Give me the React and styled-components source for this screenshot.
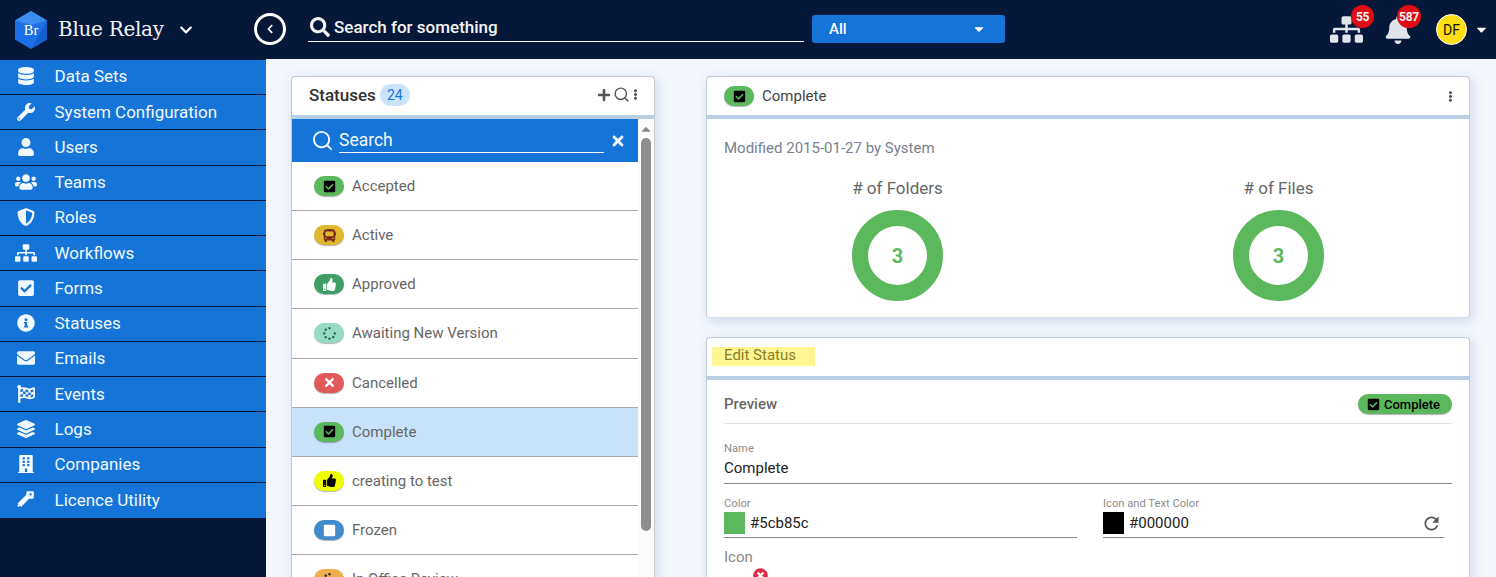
import React from "react";
import styled, { createGlobalStyle } from "styled-components";
import {
  FaDatabase, FaWrench, FaUser, FaUsers, FaShieldAlt, FaSitemap, FaCheckSquare, FaInfoCircle,
  FaEnvelope, FaFlagCheckered, FaLayerGroup, FaBuilding, FaBus, FaThumbsUp, FaSpinner,
  FaTimes, FaBell, FaPlus, FaSearch, FaEllipsisV, FaStop, FaChevronDown, FaChevronLeft, FaCaretDown, FaCaretUp, FaTimesCircle,
} from "react-icons/fa";
import { FiSearch } from "react-icons/fi";
import { MdRefresh } from "react-icons/md";

const Global = createGlobalStyle`
  html, body { margin: 0; padding: 0; height: 100%; overflow: hidden; background: #f4f8fd; }
  body { font-family: Roboto, "Liberation Sans", sans-serif; }
  * { box-sizing: border-box; }
`;

const Page = styled.div`
  width: 1496px; height: 577px; overflow: hidden; display: flex; flex-direction: column;
`;
const Header = styled.header`
  height: 59px; flex: none; background: #06183a; display: flex; align-items: center; color: #fff;
`;
const Brand = styled.div`
  width: 254px; flex: none; display: flex; align-items: center; padding-left: 14px; height: 100%;
`;
const BrandName = styled.span`
  font-family: "DejaVu Serif", "Liberation Serif", serif; font-size: 20px; color: #f0f2f5; margin: -2px 0 0 10px; letter-spacing: -0.3px;
`;
const BrandCaret = styled.span`
  display: flex; margin-left: 15px; font-size: 14px; color: #fff;
`;
const BackButton = styled.button`
  width: 32px; height: 32px; margin-top: -1px; border-radius: 50%; border: 3px solid #fff; background: transparent; color: #fff;
  display: flex; align-items: center; justify-content: center; padding: 0; font-size: 10px; flex: none;
`;
const SearchBox = styled.div`
  width: 496px; height: 28px; margin: -3px 0 0 22px; display: flex; align-items: center; gap: 4px; border-bottom: 1px solid #fff;
  padding: 0 0 1px 2px; font-size: 17px; font-weight: 500; color: #f4f4f4; flex: none;
`;
const Select = styled.div`
  width: 193px; height: 28px; margin: -1px 0 0 8px; background: #1474d8; border-radius: 3px; display: flex; align-items: center;
  justify-content: space-between; padding: 0 19px 0 17px; font-size: 15px; font-weight: 500; flex: none;
`;
const HeaderRight = styled.div`
  margin-left: auto; display: flex; align-items: center; height: 100%; padding-right: 7px;
`;
const Alert = styled.div`
  position: relative; display: flex; color: #e1e4ea; margin-right: ${p => p.$gap}px;
`;
const Badge = styled.span`
  position: absolute; top: ${p => p.$top}px; left: ${p => p.$left}px; min-width: ${p => p.$w}px; height: 23px; border-radius: 12px; background: #e00b15; color: #f4f4f4;
  font-size: 12px; font-weight: 700; display: flex; align-items: center; justify-content: center; letter-spacing: -0.3px;
`;
const Avatar = styled.div`
  width: 31px; height: 31px; border-radius: 50%; background: #ffdf14; border: 1px solid #fff; color: #111; font-size: 14px;
  display: flex; align-items: center; justify-content: center; flex: none;
`;
const AvatarCaret = styled.span`
  display: flex; font-size: 15px; margin-left: 7px;
`;
const Body = styled.div`
  flex: 1; min-height: 0; display: flex;
`;
const Sidebar = styled.nav`
  width: 266px; flex: none; background: #06183a; padding-top: 0.75px;
`;
const NavItem = styled.div`
  height: 35.25px; padding-bottom: 1px; background: #1474d8; border-bottom: 1px solid #06183a; display: flex; align-items: center; color: #f2f8ff;
  font-size: 17px; &:last-child { border-bottom: 0; }
`;
const NavIcon = styled.span`
  width: 54.5px; flex: none; display: flex; justify-content: center; padding-right: 3px;
`;
const Main = styled.main`
  flex: 1; min-width: 0; display: grid; grid-template-columns: 364px 1fr; column-gap: 51px; padding: 17px 26px 0 25px; align-items: start;
`;
const Card = styled.section`
  background: #fff; border-radius: 4px; border: 1px solid #c3c9d3; border-bottom-color: #d8dde6; box-shadow: 2px 3px 12px rgba(90, 125, 180, .25);
`;
const ListCard = styled(Card)`
  height: 560px; overflow: hidden;
`;
const RightColumn = styled.div`
  display: flex; flex-direction: column; gap: 19px;
`;
const CardHead = styled.div`
  height: 38px; border-bottom: 4px solid #b8cfe6; box-sizing: content-box; display: flex; align-items: center;
  padding: 0 ${p => p.$pr || 17}px ${p => p.$pb || 0}px 17px; color: #444;
`;
const ListHead = styled(CardHead)`
  height: 35px;
`;
const CardTitle = styled.h2`
  margin: 0; font-size: 17px; font-weight: 500; color: #333;
`;
const Count = styled.span`
  height: 22px; width: 30px; margin-left: 4px; border-radius: 11px; background: #cbe4fb; color: #1474d8; font-size: 14px; display: flex; align-items: center; justify-content: center;
`;
const Tools = styled.div`
  margin-left: auto; display: flex; align-items: center; color: #555;
`;
const ListBody = styled.div`
  display: flex; height: 520px;
`;
const ListCol = styled.div`
  flex: 1; min-width: 0;
`;
const ListSearch = styled.div`
  height: 43px; background: #1474d8; color: #f2f8ff; display: flex; align-items: center; padding: 0 12px 0 18.5px; font-size: 17.5px;
`;
const ListSearchField = styled.div`
  flex: 1; height: 25px; margin: 0 6px 0 5.5px; border-bottom: 1px solid #fff; line-height: 24px;
`;
const Row = styled.div`
  height: 49.15px; display: flex; align-items: center; padding-left: 22px; border-bottom: 1px solid #aaa; background: ${p => p.$active ? "#c8e2fb" : "#fff"};
  color: #666; font-size: 15px; gap: 8px;
`;
const Pill = styled.span`
  width: 30px; height: 20px; flex: none; border-radius: 10px; background: ${p => p.$bg}; color: ${p => p.$fg}; display: flex; align-items: center; justify-content: center;
  font-size: ${p => p.$size || 13}px; box-shadow: 0 1px 1px rgba(0,0,0,.3);
`;
const Track = styled.div`
  width: 16px; flex: none; background: #fbfbfb; display: flex; flex-direction: column; align-items: center; color: #888; padding-top: 3px;
`;
const Arrow = styled.span`
  display: flex; height: 13px; align-items: center; font-size: 14px; margin-bottom: 3px;
`;
const Thumb = styled.div`
  width: 10px; height: 393px; background: #8e8e8e; border-radius: 5px; flex: none;
`;
const HeadLabel = styled.span`
  font-size: 15px; color: #444; margin-left: 8px;
`;
const Modified = styled.div`
  padding: 19.5px 17px 0; font-size: 15px; color: #788290; height: 53px;
`;
const Stats = styled.div`
  display: grid; grid-template-columns: 1fr 1fr; height: 145px;
`;
const Stat = styled.div`
  display: flex; flex-direction: column; align-items: center;
`;
const StatTitle = styled.div`
  font-size: 17px; color: #666; line-height: 20px; margin-bottom: 12px; padding-top: 6px;
`;
const Donut = styled.div`
  width: 91px; height: 91px; border-radius: 50%; border: 16px solid #5cb85c; color: #5cb85c; font-size: 20px; font-weight: 700; display: flex; align-items: center; justify-content: center;
`;
const EditTitle = styled.span`
  margin: -2px 0 0 -12px; padding: 0 19px 0 12px; height: 19px; line-height: 17px; background: #fff691; color: #86802a; font-size: 15px;
`;
const Form = styled.div`
  padding: 13px 17px 0;
`;
const PreviewRow = styled.div`
  display: flex; align-items: center; justify-content: space-between; border-bottom: 1px solid #e2e2e2; padding-bottom: 8px; box-sizing: content-box; height: 22px;
  font-size: 15px; font-weight: 500; color: #666;
`;
const WidePill = styled.span`
  height: 20px; width: 94px; padding-right: 3px; border-radius: 10px; background: #5cb85c; color: #000; font-size: 13px; font-weight: 500; display: flex; align-items: center; justify-content: center; gap: 4px;
  box-shadow: 0 1px 1px rgba(0,0,0,.3);
`;
const Field = styled.div`
  margin-top: ${p => p.$top || 0}px; color: #222;
`;
const FieldLabel = styled.div`
  font-size: 11.2px; line-height: 13px; color: #8c8c8c;
`;
const NameValue = styled.div`
  font-size: 15px; height: 28px; line-height: 24px; border-bottom: 1px solid #888; margin-top: 1px;
`;
const ColorGrid = styled.div`
  display: grid; grid-template-columns: 353px 341px; column-gap: 26px; margin-top: 13px;
`;
const ColorValue = styled.div`
  height: 28px; border-bottom: 1px solid #888; display: flex; align-items: flex-start; gap: 5px; font-size: 15px; line-height: 27px;
`;
const Swatch = styled.span`
  width: 21px; height: 22px; flex: none; margin-top: 2px; background: ${p => p.$c};
`;
const Reload = styled.span`
  margin: 0 2px 0 auto; display: flex; font-size: 21px; color: #555; padding-top: 3px;
`;
const IconLabel = styled.div`
  font-size: 15px; color: #888; margin-top: 11px; line-height: 17px;
`;
const RemoveIcon = styled.div`
  padding-left: 29px; color: #dc2b47; font-size: 15px; display: flex; margin-top: 2px; height: 15px;
`;

function KeyIcon({ size }) {
  return (
    <svg width={size} height={size} viewBox="0 0 24 24" fill="currentColor">
      <path
        fillRule="evenodd"
        d="M13 3Q13 1.5 14.5 1.5H21Q22.5 1.5 22.5 3V9.5Q22.5 11 21 11H16.5L6.5 21.5L4.8 19.8L3.2 21.4L1.6 19.8L3.2 18.2L2 17L13 6ZM18.5 4A1.5 1.5 0 1 0 18.5 7A1.5 1.5 0 1 0 18.5 4Z"
      />
    </svg>
  );
}

const nav = [
  [FaDatabase, "Data Sets", 18], [FaWrench, "System Configuration", 18], [FaUser, "Users", 18], [FaUsers, "Teams", 22],
  [FaShieldAlt, "Roles", 18], [FaSitemap, "Workflows", 22], [FaCheckSquare, "Forms", 18], [FaInfoCircle, "Statuses", 18],
  [FaEnvelope, "Emails", 18], [FaFlagCheckered, "Events", 18], [FaLayerGroup, "Logs", 18], [FaBuilding, "Companies", 18], [KeyIcon, "Licence Utility", 19],
];
const rows = [
  ["Accepted", FaCheckSquare, "#5cb85c", "#000"],
  ["Active", FaBus, "#dfb82f", "#7b2a18"],
  ["Approved", FaThumbsUp, "#3d9f63", "#fff"],
  ["Awaiting New Version", FaSpinner, "#97dcc2", "#1e6b5a"],
  ["Cancelled", FaTimes, "#e05a5a", "#fff"],
  ["Complete", FaCheckSquare, "#5cb85c", "#000", true],
  ["creating to test", FaThumbsUp, "#eeff00", "#000"],
  ["Frozen", FaStop, "#428bca", "#fff"],
  ["In Office Review", FaSpinner, "#f0ad4e", "#222"],
];

function Logo() {
  return (
    <svg width="34" height="38" viewBox="0 0 34 38">
      <polygon points="17,0 33,9.5 33,28.5 17,38 1,28.5 1,9.5" fill="#1b70e6" />
      <polygon points="17,0 33,9.5 17,14 1,9.5" fill="#3d8cf0" />
      <polygon points="33,9.5 33,28.5 17,38 24,26" fill="#1460cc" />
      <text x="17" y="24" textAnchor="middle" fontFamily="Liberation Serif, serif" fontSize="14.5" fill="#fff">Br</text>
    </svg>
  );
}

export default function App() {
  return (
    <Page>
      <Global />
      <Header>
        <Brand>
          <Logo />
          <BrandName>Blue Relay</BrandName>
          <BrandCaret><FaChevronDown /></BrandCaret>
        </Brand>
        <BackButton><FaChevronLeft /></BackButton>
        <SearchBox><FaSearch size={20} />Search for something</SearchBox>
        <Select>All<FaCaretDown size={14} /></Select>
        <HeaderRight>
          <Alert $gap={21}>
            <FaSitemap size={33} />
            <Badge $top={-8} $left={21} $w={23}>55</Badge>
          </Alert>
          <Alert $gap={24}>
            <FaBell size={28} />
            <Badge $top={-10.5} $left={13} $w={24}>587</Badge>
          </Alert>
          <Avatar>DF</Avatar>
          <AvatarCaret><FaCaretDown /></AvatarCaret>
        </HeaderRight>
      </Header>
      <Body>
        <Sidebar>
          {nav.map(([Icon, label, size]) => (
            <NavItem key={label}><NavIcon><Icon size={size} /></NavIcon>{label}</NavItem>
          ))}
        </Sidebar>
        <Main>
          <ListCard>
            <ListHead $pr={13} $pb={3}>
              <CardTitle>Statuses</CardTitle>
              <Count>24</Count>
              <Tools>
                <FaPlus size={14} />
                <FiSearch size={17} style={{ marginLeft: 2.5 }} />
                <FaEllipsisV size={11} />
              </Tools>
            </ListHead>
            <ListBody>
              <ListCol>
                <ListSearch>
                  <FiSearch size={23} />
                  <ListSearchField>Search</ListSearchField>
                  <FaTimes size={16} />
                </ListSearch>
                {rows.map(([label, Icon, bg, fg, active]) => (
                  <Row key={label} $active={active}>
                    <Pill $bg={bg} $fg={fg}><Icon /></Pill>
                    {label}
                  </Row>
                ))}
              </ListCol>
              <Track>
                <Arrow><FaCaretUp /></Arrow>
                <Thumb />
              </Track>
            </ListBody>
          </ListCard>
          <RightColumn>
            <Card>
              <CardHead $pr={13}>
                <Pill $bg="#5cb85c" $fg="#000"><FaCheckSquare /></Pill>
                <HeadLabel>Complete</HeadLabel>
                <Tools><FaEllipsisV size={11} /></Tools>
              </CardHead>
              <Modified>Modified 2015-01-27 by System</Modified>
              <Stats>
                <Stat><StatTitle># of Folders</StatTitle><Donut>3</Donut></Stat>
                <Stat><StatTitle># of Files</StatTitle><Donut>3</Donut></Stat>
              </Stats>
            </Card>
            <Card>
              <CardHead><EditTitle>Edit Status</EditTitle></CardHead>
              <Form>
                <PreviewRow>
                  Preview
                  <WidePill><FaCheckSquare size={13} />Complete</WidePill>
                </PreviewRow>
                <Field $top={18}>
                  <FieldLabel>Name</FieldLabel>
                  <NameValue>Complete</NameValue>
                </Field>
                <ColorGrid>
                  <Field>
                    <FieldLabel>Color</FieldLabel>
                    <ColorValue><Swatch $c="#5cb85c" />#5cb85c</ColorValue>
                  </Field>
                  <Field>
                    <FieldLabel>Icon and Text Color</FieldLabel>
                    <ColorValue><Swatch $c="#000" />#000000<Reload><MdRefresh /></Reload></ColorValue>
                  </Field>
                </ColorGrid>
                <IconLabel>Icon</IconLabel>
                <RemoveIcon><FaTimesCircle /></RemoveIcon>
              </Form>
            </Card>
          </RightColumn>
        </Main>
      </Body>
    </Page>
  );
}
